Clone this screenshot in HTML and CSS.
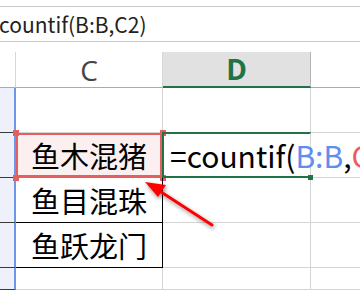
FILE: index.html
```html
<!DOCTYPE html>
<html lang="zh">
<head>
  <meta charset="UTF-8" />
  <title>countif</title>
  <link rel="stylesheet" href="styles.css">
</head>
<body>
  <div class="formula-bar">
    <span class="formula-text">countif(B:B,C2)</span>
  </div>

  <div class="sheet">
    <div class="corner"></div>
    <div class="col-head">C</div>
    <div class="col-head active">D</div>
    <div class="col-head rest"></div>

    <div class="row-head"></div>
    <div class="cell"></div>
    <div class="cell"></div>
    <div class="cell rest"></div>

    <div class="row-head"></div>
    <div class="cell picked">鱼木混猪
      <span class="handle tl"></span><span class="handle tr"></span>
      <span class="handle bl"></span><span class="handle br"></span>
    </div>
    <div class="cell editing">=countif(<span class="ref-b">B:B</span>,<span class="ref-c">C</span>
      <span class="fill-handle"></span>
    </div>
    <div class="cell rest"></div>

    <div class="row-head"></div>
    <div class="cell boxed">鱼目混珠</div>
    <div class="cell"></div>
    <div class="cell rest"></div>

    <div class="row-head"></div>
    <div class="cell boxed">鱼跃龙门</div>
    <div class="cell"></div>
    <div class="cell rest"></div>

    <div class="row-head"></div>
    <div class="cell"></div>
    <div class="cell"></div>
    <div class="cell rest"></div>
  </div>

  <svg class="arrow" width="360" height="290" viewBox="0 0 360 290">
    <defs>
      <filter id="shade" x="-20%" y="-20%" width="140%" height="140%">
        <feGaussianBlur in="SourceAlpha" stdDeviation="2" />
        <feOffset dx="1" dy="2" />
        <feComponentTransfer><feFuncA type="linear" slope="0.45" /></feComponentTransfer>
        <feMerge><feMergeNode /><feMergeNode in="SourceGraphic" /></feMerge>
      </filter>
    </defs>
    <g filter="url(#shade)">
      <line x1="212" y1="225" x2="158" y2="190" stroke="#f00" stroke-width="3" stroke-linecap="round" />
      <polygon points="145,182 166,185 158,197" fill="#f00" />
    </g>
  </svg>
</body>
</html>
```

FILE: styles.css
```css
html {
  overflow: hidden;
}
body {
  margin: 0;
  width: 360px;
  height: 290px;
  overflow: hidden;
  background: #fff;
  position: relative;
  font-family: "Noto Sans CJK SC", "Noto Sans", sans-serif;
  color: #000;
}
.formula-bar {
  margin-top: 6px;
  height: 34px;
  border-top: 1px solid #c8c8c8;
  border-bottom: 1px solid #c8c8c8;
  display: flex;
  align-items: center;
  overflow: hidden;
}
.formula-text {
  margin-left: -1px;
  font-size: 21px;
  color: #222;
  white-space: nowrap;
}
.sheet {
  margin-top: 10px;
  display: grid;
  grid-template-columns: 16px 147px 148px 49px;
  grid-template-rows: 36px 45px 45px 45px 45px 22px;
}
.corner {
  border-right: 1px solid #d6d6d6;
  border-bottom: 1px solid #ababab;
}
.col-head {
  border-right: 1px solid #d6d6d6;
  border-bottom: 1px solid #ababab;
  display: flex;
  align-items: center;
  justify-content: center;
  font-family: "Open Sans", sans-serif;
  font-size: 28px;
  color: #444;
}
.col-head.active {
  background: #e1e1e1;
  color: #217346;
  font-weight: 700;
  border-right-color: #b4b4b4;
  border-bottom: 2px solid #217346;
}
.col-head.rest {
  border-right: none;
}
.row-head {
  background: #eef1fc;
  border-right: 2px solid #6b96e9;
  border-bottom: 1px solid #3a3a3a;
  box-sizing: border-box;
}
.cell {
  border-right: 1px solid #d4d4d4;
  border-bottom: 1px solid #d4d4d4;
  position: relative;
  white-space: nowrap;
  display: flex;
  align-items: center;
  font-size: 29px;
}
.cell.rest {
  border-right: none;
}
.picked {
  justify-content: center;
  background: #fcefef;
  box-shadow: inset 0 0 0 2px #e45f5f;
  border-color: #e45f5f;
}
.boxed {
  justify-content: center;
  border-right-color: #000;
  border-bottom-color: #000;
}
.editing {
  overflow: visible;
  padding-left: 6px;
  border-top: 2px solid #217346;
  border-left: 2px solid #217346;
  border-bottom: 2px solid #217346;
  margin-top: -1px;
  margin-left: -1px;
  font-size: 30px;
  z-index: 1;
}
.ref-b {
  color: #5d8ef0;
}
.ref-c {
  color: #f05b5b;
}
.handle {
  position: absolute;
  width: 6px;
  height: 6px;
  background: #e45f5f;
}
.tl { left: -3px; top: -3px; }
.tr { right: -4px; top: -3px; }
.bl { left: -3px; bottom: -4px; }
.br { right: -4px; bottom: -4px; }
.fill-handle {
  position: absolute;
  right: -3px;
  bottom: -4px;
  width: 5px;
  height: 5px;
  background: #217346;
}
.arrow {
  position: absolute;
  left: 0;
  top: 0;
  pointer-events: none;
}
```
